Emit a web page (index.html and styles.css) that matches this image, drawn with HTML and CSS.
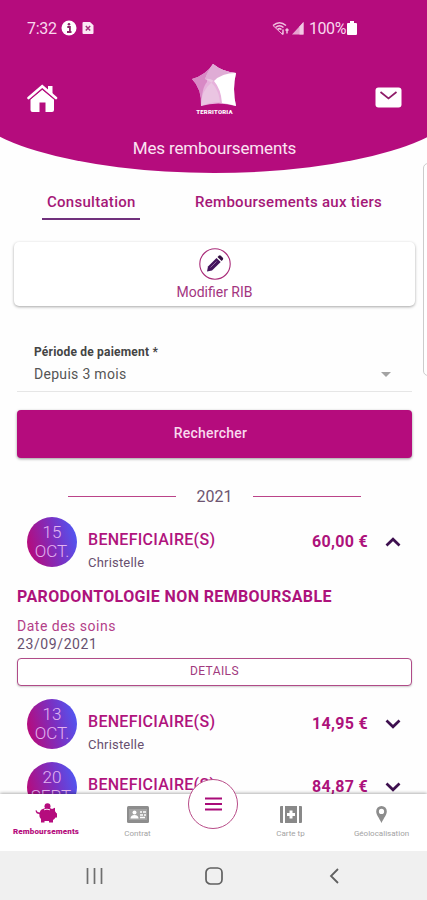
FILE: index.html
```html
<!DOCTYPE html>
<html lang="fr">
<head>
  <meta charset="UTF-8">
  <meta name="viewport" content="width=device-width, initial-scale=1">
  <title>Mes remboursements</title>
  <link rel="stylesheet" href="styles.css">
</head>
<body>
<div class="app">
  <header class="header">
    <div class="status">
      <span class="time">7:32</span>
      <svg class="info" width="16" height="16" viewBox="0 0 16 16"><circle cx="8" cy="8" r="7.5" fill="#fff"/><path d="M6.3 7h2.6v5M6 12h4.500" fill="none" stroke="#8d2467" stroke-width="1.800"/><circle cx="8" cy="4.300" r="1.300" fill="#8d2467"/></svg>
      <svg class="sim" width="12" height="14" viewBox="0 0 12 14"><path d="M1.500 1H8l3.500 3.300V12a1 1 0 0 1-1 1h-9a1 1 0 0 1-1-1V2a1 1 0 0 1 1-1z" fill="#fbe9f5"/><path d="M3.800 5l4.400 4.500M8.200 5L3.800 9.500" stroke="#a8327f" stroke-width="1.500"/></svg>
      <span class="spacer"></span>
      <svg class="wifi" width="18" height="15" viewBox="0 0 18 15" fill="none" stroke="#f0c0e0" stroke-width="1.500"><path d="M1 4.500Q7.500-1 14 4.500M3.500 6.500Q7.500 3 11.500 6.500M5.500 8.500Q7.500 6.800 9.500 8.500"/><path d="M1 4.500L9.500 12.500" stroke-width="1"/><path d="M11 8.500v5M9.500 12l1.500 1.500M15 12.500V8M13.500 9.500L15 8l1.500 1.500"/></svg>
      <svg class="signal" width="12" height="13" viewBox="0 0 12 13"><path d="M0 12.500L11.500 0v12.500z" fill="#e7a3d0"/><path d="M7.500 4.500L11.500 0v12.500h-4z" fill="#f2c9e4"/></svg>
      <span class="percent">100%</span>
      <svg class="battery" width="10" height="14" viewBox="0 0 10 14"><path d="M3 0h4v2h2a1 1 0 0 1 1 1v10a1 1 0 0 1-1 1H1a1 1 0 0 1-1-1V3a1 1 0 0 1 1-1h2z" fill="#fff"/></svg>
    </div>
    <div class="topbar">
      <svg class="home" width="31" height="29" viewBox="0 0 31 29"><path d="M21 2h4.500v9L21 7z" fill="#fff"/><path d="M3.500 15.500L15.200 5.800L27 15.500V26a2 2 0 0 1-2 2h-6.500v-9.500h-6V28h-7a2 2 0 0 1-2-2z" fill="#fff"/><path d="M1.500 16.200L15.200 4.800L29 16.200" fill="none" stroke="#b50c7d" stroke-width="1.200"/><path d="M1.500 14L15.200 2.300L29 14" fill="none" stroke="#fff" stroke-width="2.600" stroke-linecap="round"/></svg>
      <div class="logo">
        <svg width="45" height="43" viewBox="0 0 45 43"><path d="M21 0Q31 8 44 9Q40 25 44 42Q26 37 9 42Q10 25 0 15Q14 11 21 0z" fill="#e7b2dc"/><path d="M0 15Q14 11 21 0Q14 14 15 18Q10 23 9 42Q10 25 0 15z" fill="#d889c5"/><path d="M21 0Q16 7 13 15Q26 20 28 38Q18 38 9 42Q9 27 19 19Q28 9 44 9Q31 8 21 0z" fill="#eac5e2"/><path d="M21 0Q31 8 44 9Q29 9 22 17Q18 14 13 15Q15 8 21 0z" fill="#dfacd5"/><path d="M44 9Q30 9 22 17Q29 25 30 39Q38 40 44 42Q40 25 44 9z" fill="#fff"/></svg>
        <span>TERRITORIA</span>
      </div>
      <svg class="mail" width="27" height="21" viewBox="0 0 27 21"><rect x=".5" y=".5" width="26" height="20" rx="3" fill="#fff"/><path d="M5.500 5L13.500 11.500L21.500 5" fill="none" stroke="#8e1c68" stroke-width="1.700"/></svg>
    </div>
    <h1>Mes remboursements</h1>
  </header>

  <main class="content">
    <nav class="tabs">
      <a class="tab active">Consultation</a>
      <a class="tab tiers">Remboursements aux tiers</a>
    </nav>

    <div class="rib-card">
      <svg width="32" height="32" viewBox="0 0 32 32"><circle cx="16" cy="16" r="15.200" fill="#fff" stroke="#a82a78" stroke-width="1.100"/><path d="M8 23.500l1-5L17.500 10l4.200 4L13 22.600z" fill="#43145c"/><path d="M18.500 9l1.300-1.300a1.500 1.500 0 0 1 2 0l2 2a1.500 1.500 0 0 1 0 2L22.600 13z" fill="#32103f"/><path d="M11.500 19.500l6-6" stroke="#a27aae" stroke-width=".8"/></svg>
      <span>Modifier RIB</span>
    </div>

    <div class="field">
      <label>Période de paiement *</label>
      <div class="select"><span>Depuis 3 mois</span><i class="arrow"></i></div>
    </div>
    <button class="search">Rechercher</button>

    <div class="year"><span>2021</span></div>

    <div class="row">
      <div class="date">15<br>OCT.</div>
      <div class="who"><strong>BENEFICIAIRE(S)</strong><span>Christelle</span></div>
      <div class="amount">60,00 €</div>
      <svg class="chevron" width="16" height="10" viewBox="0 0 16 10"><path d="M1.500 8.500L8 2.200l6.500 6.300"/></svg>
    </div>
    <section class="details">
      <h2>PARODONTOLOGIE NON REMBOURSABLE</h2>
      <div class="care-label">Date des soins</div>
      <div class="care-date">23/09/2021</div>
      <button class="btn-details">DETAILS</button>
    </section>
    <div class="row">
      <div class="date">13<br>OCT.</div>
      <div class="who"><strong>BENEFICIAIRE(S)</strong><span>Christelle</span></div>
      <div class="amount">14,95 €</div>
      <svg class="chevron" width="16" height="10" viewBox="0 0 16 10"><path d="M1.500 1.500L8 7.800l6.500-6.300"/></svg>
    </div>
    <div class="row">
      <div class="date">20<br>SEPT.</div>
      <div class="who"><strong>BENEFICIAIRE(S)</strong></div>
      <div class="amount">84,87 €</div>
      <svg class="chevron" width="16" height="10" viewBox="0 0 16 10"><path d="M1.500 1.500L8 7.800l6.500-6.300"/></svg>
    </div>
  </main>

  <nav class="bottom-nav">
    <a class="item active">
      <svg width="23" height="20" viewBox="0 0 23 20" fill="#b50c7d"><circle cx="12.500" cy="3.200" r="3"/><path d="M6.500 6.500Q12.500 3.500 17 6l3-1.300v3.500q1 1 1.300 2H22v4.300h-1.500Q19.500 16 18 17v2.500h-4V18H9.500v1.500H6V16q-2-2.200-1.700-5Q1 11 .5 7.500l1-.2Q2 9.500 4.700 9.500q.5-2 1.800-3z"/><path d="M9 6.800q3-1.200 6 0" fill="none" stroke="#fff" stroke-width=".9"/></svg>
      <span>Remboursements</span>
    </a>
    <a class="item contrat">
      <svg width="22" height="17" viewBox="0 0 22 17"><rect width="22" height="17" rx="1.500" fill="#8d8d8d"/><path d="M2 3h18v11H2z" fill="#a3a3a3"/><circle cx="7.500" cy="6.500" r="2" fill="#fff"/><path d="M3.500 12.500q0-3.500 4-3.500t4 3.500z" fill="#fff"/><path d="M13 6h2m1 0h3M13 9h3m1 0h2M13 11.500h5" stroke="#fff" stroke-width="1.300"/></svg>
      <span>Contrat</span>
    </a>
    <a class="menu">
      <svg width="17" height="14" viewBox="0 0 17 14"><path d="M0 1.500h17M0 7h17M0 12.500h17" stroke="#a90b79" stroke-width="2.200"/></svg>
    </a>
    <a class="item carte">
      <svg width="22" height="17" viewBox="0 0 22 17"><path d="M0 1q0-1 1-1h2v17H1q-1 0-1-1zM5 0h12v17H5zM19 0h2q1 0 1 1v15q0 1-1 1h-2z" fill="#898989"/><path d="M11 4.500v8M7 8.500h8" stroke="#fff" stroke-width="3"/></svg>
      <span>Carte tp</span>
    </a>
    <a class="item geo">
      <svg width="11" height="17" viewBox="0 0 11 17"><path d="M5.500 0A5.300 5.300 0 0 0 .2 5.500C.2 9 3 11.500 5.500 17C8 11.500 10.800 9 10.800 5.500A5.300 5.300 0 0 0 5.500 0zm0 2.800a2.600 2.600 0 1 1 0 5.200a2.600 2.600 0 0 1 0-5.200z" fill="#8d8d8d"/></svg>
      <span>Géolocalisation</span>
    </a>
  </nav>

  <div class="system-nav">
    <svg width="17" height="16" viewBox="0 0 17 16"><path d="M1.500 0v16M8.500 0v16M15.500 0v16" stroke="#6e6e6e" stroke-width="1.700"/></svg>
    <svg width="18" height="18" viewBox="0 0 18 18"><rect x="1" y="1" width="16" height="16" rx="4.500" fill="none" stroke="#606060" stroke-width="1.700"/></svg>
    <svg width="10" height="16" viewBox="0 0 10 16"><path d="M9 1L2 8l7 7" fill="none" stroke="#606060" stroke-width="1.800"/></svg>
  </div>

  <div class="edge-panel"></div>
</div>
</body>
</html>
```
FILE: styles.css
```css
* { box-sizing: border-box; }

body {
  margin: 0;
  font-family: Roboto, "Liberation Sans", sans-serif;
  background-color: #fefefe;
  color: #555;
}

svg { display: block; flex: none; }

.app {
  position: relative;
  display: flex;
  flex-direction: column;
  width: 427px;
  height: 900px;
  overflow: hidden;
}

/* wider than the screen so that the bottom edge is a flat arc */
.header {
  flex: none;
  width: 500px;
  height: 173px;
  margin-left: -36px;
  padding: 18px 36px 0;
  background-color: #b50c7d;
  border-radius: 0 0 250px 250px / 0 0 75px 75px;
  color: #fff;
}

.status {
  display: flex;
  align-items: center;
  height: 20px;
  padding: 0 71px 0 27px;
  font-size: 16px;
  color: #f9d8ee;
}

.time { width: 34px; letter-spacing: -0.3px; }
.sim { margin-left: 5px; }
.spacer { flex: 1; }
.signal { margin-left: 2px; }
.percent { margin: 0 1px 0 5px; letter-spacing: -0.4px; }

.topbar {
  display: flex;
  justify-content: space-between;
  align-items: flex-start;
  height: 77px;
  padding: 26px 26px 0 27px;
}

.home { margin-top: 20px; }
.mail { margin-top: 23px; }

.logo {
  display: flex;
  flex-direction: column;
  align-items: center;
  width: 45px;
  margin-right: 4px;
}

.logo span {
  margin-top: 1px;
  font-size: 6px;
  line-height: 7px;
  font-weight: 900;
  letter-spacing: 0.2px;
}

h1 {
  margin: 23px 0 0;
  padding-left: 1px;
  font-size: 17px;
  line-height: 20px;
  font-weight: 400;
  letter-spacing: -0.15px;
  text-align: center;
  color: #fbe3f2;
}

.content {
  flex: 1;
  min-height: 0;
  overflow: hidden;
}

.tabs {
  display: flex;
  padding: 19px 0 0 42px;
  font-size: 15px;
  line-height: 20px;
  font-weight: 500;
  letter-spacing: 0.28px;
  color: #a51878;
}

.tab { height: 28px; white-space: nowrap; }
.tab.active { width: 98px; padding-left: 5px; border-bottom: 2px solid #70317c; }
.tiers { margin-left: 55px; }

.rib-card {
  display: flex;
  flex-direction: column;
  align-items: center;
  width: 401px;
  height: 64px;
  margin: 22px 0 0 14px;
  padding-top: 6px;
  border-radius: 5px;
  background-color: #fff;
  box-shadow: 0 1px 3px rgba(0,0,0,0.35);
  font-size: 14px;
  line-height: 18px;
  color: #a3357f;
}

.rib-card span { margin-top: 3px; }

.field {
  margin: 37px 15px 0 17px;
  height: 49px;
  padding-left: 17px;
  border-bottom: 1px solid #e6e6e6;
}

.field label {
  display: block;
  font-size: 12px;
  line-height: 18px;
  font-weight: 700;
  letter-spacing: 0.2px;
  color: #444;
}

.select {
  display: flex;
  justify-content: space-between;
  align-items: center;
  margin-top: 3px;
  padding-right: 21px;
  font-size: 14px;
  line-height: 20px;
  letter-spacing: 0.3px;
}

.arrow {
  border: 5px solid transparent;
  border-top-color: #a3a3a3;
  border-bottom: 0;
}

.search {
  display: block;
  width: 395px;
  height: 48px;
  margin: 18px 0 0 17px;
  padding: 0 8px 2px 0;
  border: 0;
  border-radius: 4px;
  background-color: #b50c7d;
  box-shadow: 0 1px 3px rgba(0,0,0,0.4);
  font: 500 14px Roboto, sans-serif;
  letter-spacing: 0.2px;
  color: #f9d8ee;
}

.year {
  display: flex;
  align-items: center;
  gap: 21px;
  height: 20px;
  margin: 28px 66px 0 68px;
  font-size: 16px;
  color: #6d5570;
}

.year::before, .year::after {
  content: "";
  flex: 1;
  height: 1px;
  background-color: #bb4389;
}

.row {
  display: flex;
  height: 50px;
  margin: 11px 26px 0 27px;
}

.row + .row { margin-top: 13px; }

.date {
  width: 50px;
  height: 50px;
  padding-top: 6px;
  border-radius: 50%;
  background: linear-gradient(75deg, #b50c7d 10%, #7c2fc0 55%, #4e59f5 95%);
  font-size: 17px;
  line-height: 19px;
  font-weight: 300;
  text-align: center;
  white-space: nowrap;
  color: #e3b4f0;
}

.who { flex: 1; padding: 12px 0 0 11px; }
.who strong { display: block; font-size: 16px; line-height: 22px; font-weight: 500; letter-spacing: 0.28px; color: #b0147d; }
.who span { display: block; margin-top: 3px; font-size: 13px; line-height: 18px; letter-spacing: 0.2px; color: #68506f; }

.amount {
  padding-top: 15px;
  font-size: 16px;
  line-height: 20px;
  font-weight: 700;
  letter-spacing: 0.3px;
  color: #ad127b;
}

.chevron { margin: 20px 0 0 17px; fill: none; stroke: #3e104f; stroke-width: 2.700; }

.details { margin: 20px 15px 13px 17px; }

.details h2 {
  margin: 0;
  font-size: 16px;
  line-height: 20px;
  font-weight: 700;
  letter-spacing: 0.37px;
  color: #ad127b;
}

.care-label { margin-top: 11px; font-size: 14px; line-height: 17px; letter-spacing: 0.5px; color: #b33e89; }
.care-date { font-size: 14px; line-height: 18px; letter-spacing: 0.6px; color: #68506f; }

.btn-details {
  display: block;
  width: 100%;
  height: 28px;
  margin-top: 5px;
  padding: 0 0 2px;
  border: 1px solid #b04b88;
  border-radius: 4px;
  background-color: #fff;
  box-shadow: 0 1px 2px rgba(0,0,0,0.2);
  font: 400 12px Roboto, sans-serif;
  letter-spacing: 0.4px;
  color: #a13a7e;
}

.bottom-nav {
  flex: none;
  position: relative;
  display: flex;
  height: 57px;
  background-color: #fff;
  box-shadow: 0 -1px 3px rgba(0,0,0,0.3);
}

.item {
  display: flex;
  flex-direction: column;
  align-items: center;
  width: 92px;
  padding-top: 12px;
  font-size: 8px;
  line-height: 10px;
  color: #a3a3a3;
}

.item span { margin-top: 6px; }
.item.active { padding-top: 9px; font-weight: 900; letter-spacing: 0.15px; color: #b50c7d; }
.item.active span { margin-top: 4px; }

.menu {
  display: flex;
  align-items: center;
  justify-content: center;
  width: 50px;
  height: 50px;
  margin: -15px 7px 0 5px;
  border: 1px solid #b84c88;
  border-radius: 50%;
  background-color: #fff;
}

.contrat { width: 91px; }
.carte { width: 91px; }
.geo { width: 91px; }

.system-nav {
  flex: none;
  position: relative;
  display: flex;
  align-items: center;
  gap: 102px;
  height: 49px;
  padding-left: 86px;
  background-color: #f0f0f0;
}

.system-nav svg:last-child { margin-left: 4px; }

.edge-panel {
  position: absolute;
  top: 163px;
  right: -8px;
  width: 12px;
  height: 213px;
  border: 1px solid #ccc;
  border-radius: 5px;
  background-color: #fff;
}
```
